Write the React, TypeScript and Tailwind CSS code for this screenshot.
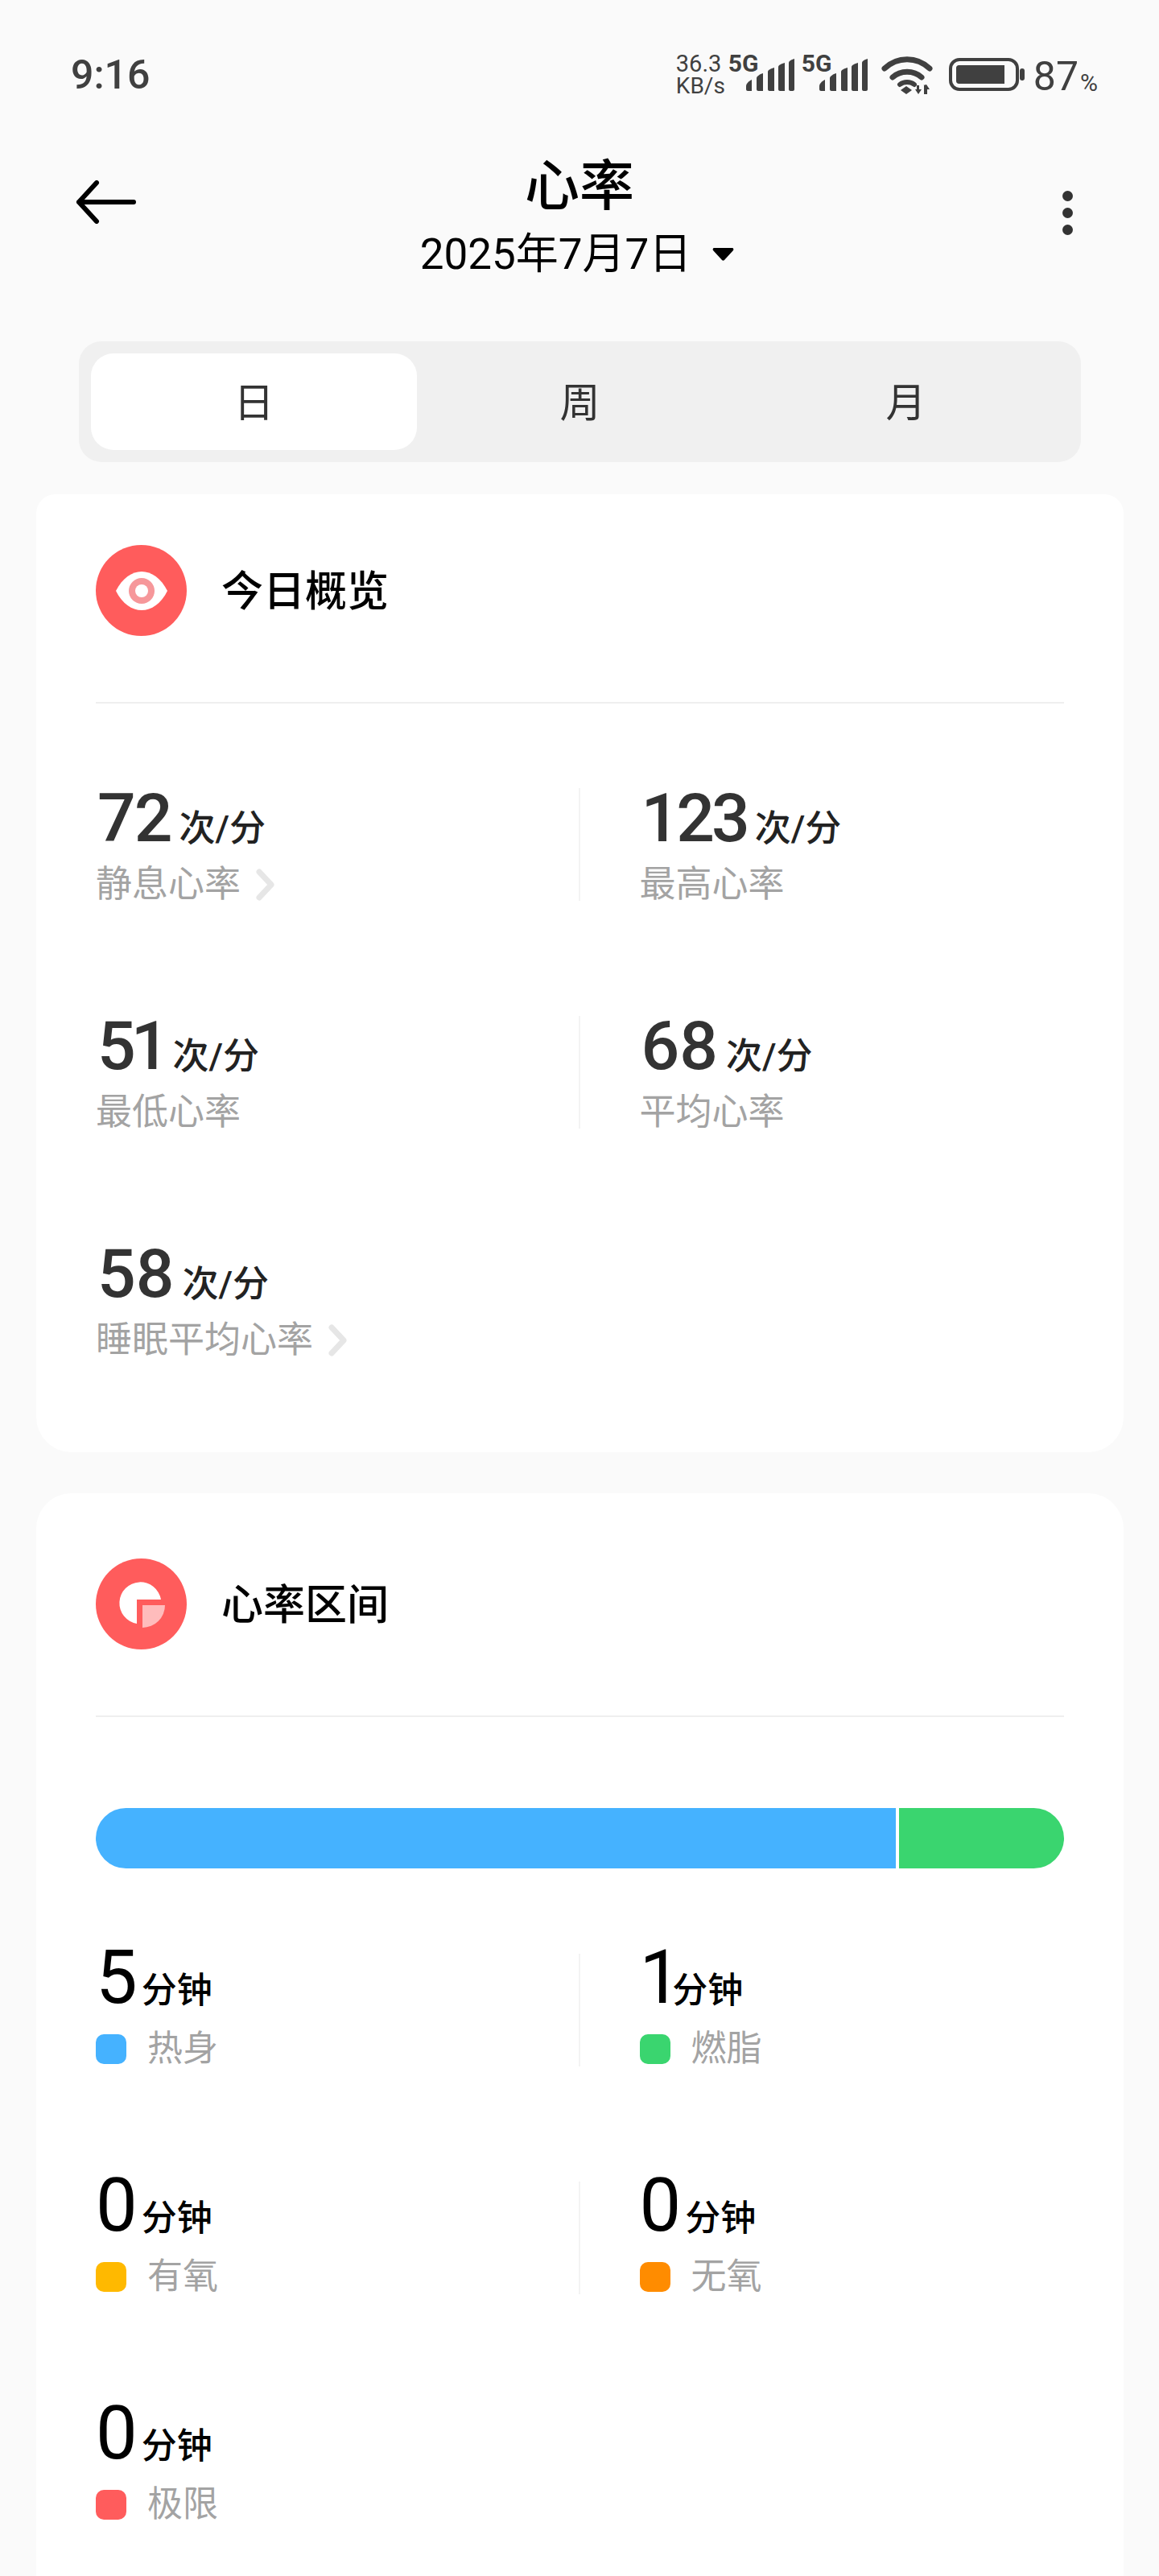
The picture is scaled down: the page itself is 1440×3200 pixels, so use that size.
import React from 'react';

function Signal() {
  return (
    <svg width="60" height="40" viewBox="0 0 60 40" className="block">
      <path d="M0 34c0-3 3-6 7-8v14H2c-1 0-2-1-2-2z" fill="#404040" />
      <path d="M13 24c0-2 4-5 8-6v22h-6c-1 0-2-1-2-2z" fill="#404040" />
      <path d="M27 16c0-2 4-4 8-5v29h-6c-1 0-2-1-2-2z" fill="#404040" />
      <path d="M40 10c0-2 4-4 8-5v35h-6c-1 0-2-1-2-2z" fill="#404040" />
      <path d="M53 5c0-2 3-4 7-5v38c0 1-1 2-2 2h-3c-1 0-2-1-2-2z" fill="#404040" />
    </svg>
  );
}

function Wifi() {
  return (
    <svg width="64" height="48" viewBox="0 0 64 48" className="block">
      <path d="M4 15C20 0 44 0 60 15" fill="none" stroke="#404040" strokeWidth="7" strokeLinecap="round" />
      <path d="M14 26c10-9 26-9 36 0" fill="none" stroke="#404040" strokeWidth="7" strokeLinecap="round" />
      <path d="M23 35c5-4 13-4 18 0" fill="none" stroke="#404040" strokeWidth="6" strokeLinecap="round" />
      <path d="M31 37l7 5-7 5-7-5z" fill="#404040" />
      <path d="M44 36h3v5h3l-4 6-4-6h2zM53 47v-11h-1l4-1 4 6h-3v6z" fill="#404040" />
    </svg>
  );
}

function Battery() {
  return (
    <svg width="95" height="41" viewBox="0 0 95 41" className="block">
      <rect x="2" y="2" width="83" height="37" rx="11" fill="none" stroke="#404040" strokeWidth="4" />
      <path d="M12 9h57v23H12c-1 0-3-1-3-3V12c0-2 2-3 3-3z" fill="#404040" />
      <rect x="88" y="13" width="6" height="15" rx="3" fill="#404040" />
    </svg>
  );
}

function EyeIcon() {
  return (
    <div className="flex h-[113px] w-[113px] shrink-0 items-center justify-center rounded-full bg-[#ff5c5c]">
      <svg width="64" height="48" viewBox="0 0 64 48">
        <path d="M0 24C8 8 20 0 32 0s24 8 32 24C56 40 44 48 32 48S8 40 0 24z" fill="#fff" />
        <circle cx="32" cy="24" r="16" fill="#f6979a" />
        <circle cx="32" cy="24" r="8" fill="#fff" />
      </svg>
    </div>
  );
}

function PieIcon() {
  return (
    <div className="flex h-[113px] w-[113px] shrink-0 items-center justify-center rounded-full bg-[#ff5c5c]">
      <svg width="58" height="58" viewBox="0 0 58 58">
        <path d="M23 53A26 26 0 1 1 53 23H23z" fill="#fff" />
        <path d="M30 58V30h28A28 28 0 0 1 30 58z" fill="#ffbcbc" />
      </svg>
    </div>
  );
}

function Chevron() {
  return (
    <svg width="24" height="40" viewBox="0 0 24 40" className="ml-[19px] block">
      <path d="M4 4l15 16L4 36" fill="none" stroke="#e6e6e6" strokeWidth="7" strokeLinecap="round" strokeLinejoin="round" />
    </svg>
  );
}

function CardHead({ icon, title }: { icon: React.ReactNode; title: string }) {
  return (
    <>
      <div className="flex items-center gap-[43px] pl-[74px]">
        {icon}
        <span className="mt-[5px] text-[52px] leading-[60px] font-medium text-black">{title}</span>
      </div>
      <div className="mx-[74px] mt-[82px] h-[2px] bg-[#efefef]" />
    </>
  );
}

function Stat({ value, label, link, tight }: { value: string; label: string; link?: boolean; tight?: string }) {
  return (
    <div className="flow-root h-[140px] pl-[74px]">
      <div className="-mt-[4px] flex h-[84px] items-baseline">
        <span className={`ml-[2px] text-[84px] leading-[84px] font-medium text-[#333] ${tight ?? ''}`}>{value}</span>
        <span className="ml-[10px] text-[45px] leading-[46px] font-medium text-[#222]">次/分</span>
      </div>
      <div className="mt-[12px] flex h-[56px] items-center text-[45px] leading-[56px] text-[#a3a3a3]">
        {label}
        {link && <Chevron />}
      </div>
    </div>
  );
}

function ZoneStat({ value, label, color }: { value: string; label: string; color: string }) {
  return (
    <div className="flow-root h-[140px] pl-[74px]">
      <div className="-mt-[12px] flex h-[84px] items-baseline">
        {/* Roboto's 1 is wider than the one in the picture */}
        <span className={`text-[92px] leading-[84px] text-black ${value === '1' ? 'tracking-[-16px]' : ''}`}>{value}</span>
        <span className="ml-[5px] text-[44px] leading-[44px] font-medium text-black">分钟</span>
      </div>
      <div className="mt-[18px] flex h-[56px] items-center gap-[26px] text-[44px] leading-[56px] text-[#a3a3a3]">
        <span className={`h-[37px] w-[38px] rounded-[10px] ${color}`} />
        {label}
      </div>
    </div>
  );
}

const overview = [
  { value: '72', label: '静息心率', link: true, tight: 'tracking-[-2px]' },
  { value: '123', label: '最高心率', tight: 'tracking-[-4px]' },
  { value: '51', label: '最低心率', tight: 'tracking-[-6px]' },
  { value: '68', label: '平均心率' },
  { value: '58', label: '睡眠平均心率', link: true },
];

const zones = [
  { value: '5', label: '热身', color: 'bg-[#45b2ff]' },
  { value: '1', label: '燃脂', color: 'bg-[#3ad56f]' },
  { value: '0', label: '有氧', color: 'bg-[#ffb900]' },
  { value: '0', label: '无氧', color: 'bg-[#ff8c00]' },
  { value: '0', label: '极限', color: 'bg-[#ff5c5c]' },
];

function StatGrid({ children }: { children: React.ReactNode[] }) {
  return (
    <div className="grid grid-cols-2 gap-y-[143px]">
      {children.map((child, i) => (
        <div key={i} className={i % 2 === 0 && i < children.length - 1 ? 'border-r-2 border-[#f3f3f3]' : ''}>
          {child}
        </div>
      ))}
    </div>
  );
}

export default function App() {
  return (
    <div className="h-[3200px] w-[1440px] overflow-hidden bg-[#fafafa] text-black [font-family:Roboto,'Noto_Sans_CJK_SC',sans-serif]">
      {/* status bar */}
      <div className="flex h-[120px] items-start justify-between pt-[68px] pr-[76px] pl-[88px]">
        <span className="text-[50px] leading-[50px] font-medium text-[#404040]">9:16</span>
        <div className="-mt-[2px] flex items-start text-[#404040]">
          <div className="flex w-[60px] flex-col text-[29px] leading-[27px]">
            <span>36.3</span>
            <span className="text-[28px]">KB/s</span>
          </div>
          <span className="ml-[5px] w-[38px] text-[30px] leading-[26px] font-bold">5G</span>
          <div className="mt-[7px] -ml-[16px]"><Signal /></div>
          <span className="ml-[9px] w-[38px] text-[30px] leading-[26px] font-bold">5G</span>
          <div className="mt-[7px] -ml-[16px]"><Signal /></div>
          <div className="mt-[4px] ml-[17px]"><Wifi /></div>
          <div className="mt-[6px] ml-[20px]"><Battery /></div>
          <span className="mt-[4px] ml-[10px] text-[50px] leading-[50px]">87</span>
          <span className="mt-[24px] ml-[2px] text-[30px] leading-[26px]">%</span>
        </div>
      </div>

      {/* title */}
      <div className="relative h-[304px]">
        <button className="absolute top-[104px] left-[94px]">
          <svg width="76" height="54" viewBox="0 0 76 54" className="block">
            <path d="M4 27h68M26 3L4 27l22 24" fill="none" stroke="#000" strokeWidth="6" strokeLinecap="round" strokeLinejoin="round" />
          </svg>
        </button>
        <div className="flex flex-col items-center pt-[72px]">
          <h1 className="text-[68px] leading-[80px] font-medium">心率</h1>
          <div className="mt-[11px] mr-[6px] flex items-center text-[53px] leading-[66px]">
            2025年7月7日
            <svg width="27" height="18" viewBox="0 0 27 18" className="ml-[26px]">
              <path d="M2 1h23c1 0 2 2 1 3L15 16c-1 1-2 1-3 0L1 4C0 3 1 1 2 1z" fill="#000" />
            </svg>
          </div>
        </div>
        <div className="absolute top-[117px] left-[1320px] flex flex-col gap-[8px]">
          <span className="h-[13px] w-[13px] rounded-full bg-[#333]" />
          <span className="h-[13px] w-[13px] rounded-full bg-[#333]" />
          <span className="h-[13px] w-[13px] rounded-full bg-[#333]" />
        </div>
      </div>

      {/* tabs */}
      <div className="mx-[98px] grid h-[150px] w-[1245px] grid-cols-3 items-center rounded-[28px] bg-[#f0f0f0] p-[15px] text-center text-[50px] text-[#333]">
        <div className="flex h-[120px] w-[405px] items-center justify-center rounded-[28px] bg-white pt-[4px]">日</div>
        <div className="pt-[4px]">周</div>
        <div className="pt-[4px]">月</div>
      </div>

      {/* today overview */}
      <div className="mt-[40px] mr-[44px] ml-[45px] h-[1190px] rounded-t-[24px] rounded-b-[44px] bg-white pt-[63px]">
        <CardHead icon={<EyeIcon />} title="今日概览" />
        <div className="mt-[105px]">
          <StatGrid>
            {overview.map((s) => (
              <Stat key={s.label} value={s.value} label={s.label} link={s.link} tight={s.tight} />
            ))}
          </StatGrid>
        </div>
      </div>

      {/* heart rate zones */}
      <div className="mt-[51px] mr-[44px] ml-[45px] h-[1400px] rounded-t-[44px] bg-white pt-[81px]">
        <CardHead icon={<PieIcon />} title="心率区间" />
        <div className="mx-[74px] mt-[113px] flex h-[75px] overflow-hidden rounded-full">
          <div className="w-[994px] bg-[#45b2ff]" />
          <div className="ml-[4px] flex-1 bg-[#3ad56f]" />
        </div>
        <div className="mt-[106px]">
          <StatGrid>
            {zones.map((z) => (
              <ZoneStat key={z.label} value={z.value} label={z.label} color={z.color} />
            ))}
          </StatGrid>
        </div>
      </div>
    </div>
  );
}
